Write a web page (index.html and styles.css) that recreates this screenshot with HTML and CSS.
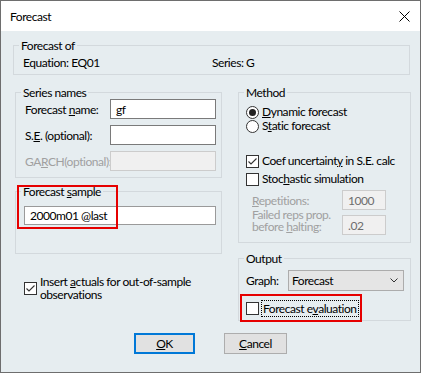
FILE: index.html
```html
<!DOCTYPE html>
<html>
<head>
<meta charset="utf-8">
<link rel="stylesheet" href="styles.css">
</head>
<body>
<div class="window">
  <div class="titlebar">
    <span class="title">Forecast</span>
    <svg class="close" width="11" height="11" viewBox="0 0 11 11"><path d="M0.5 0.5 L10.5 10.5 M10.5 0.5 L0.5 10.5" stroke="#000" stroke-width="1" fill="none"/></svg>
  </div>
  <div class="content">
    <fieldset class="grp grp-of">
      <legend>Forecast of</legend>
      <div class="of-row"><span class="of-eq">Equation: EQ01</span><span>Series: G</span></div>
    </fieldset>
    <div class="cols">
      <div class="col-left">
        <fieldset class="grp names">
          <legend>Series names</legend>
          <div class="names-body">
            <div class="frow"><span class="flabel">Forecast <u>n</u>ame:</span><span class="input">gf</span></div>
            <div class="frow"><span class="flabel">S.<u>E</u>. (optional):</span><span class="input"></span></div>
            <div class="frow"><span class="flabel disabled">GA<u>R</u>CH(optional):</span><span class="input input-disabled"></span></div>
          </div>
        </fieldset>
        <fieldset class="grp sample">
          <legend>Forecast <u>s</u>ample</legend>
          <div class="sample-body"><span class="input input-wide">2000m01 @last</span></div>
        </fieldset>
        <div class="insert">
          <span class="cb"><svg width="11" height="11" viewBox="0 0 11 11"><polyline points="1.5,5.5 4,8 9.5,2.5" fill="none" stroke="#333" stroke-width="1.1"/></svg></span>
          <span class="insert-text">Insert <u>a</u>ctuals for out-of-sample<br>observations</span>
        </div>
      </div>
      <div class="col-right">
        <fieldset class="grp method">
          <legend>Method</legend>
          <div class="method-body">
            <div class="opt"><svg class="radio" width="13" height="13" viewBox="0 0 13 13"><circle cx="6.5" cy="6.5" r="6" fill="#fff" stroke="#333"/><circle cx="6.5" cy="6.5" r="3.5" fill="#222"/></svg><span><u>D</u>ynamic forecast</span></div>
            <div class="opt"><svg class="radio" width="13" height="13" viewBox="0 0 13 13"><circle cx="6.5" cy="6.5" r="6" fill="#fff" stroke="#333"/></svg><span>S<u>t</u>atic forecast</span></div>
            <div class="opt opt-coef"><span class="cb"><svg width="11" height="11" viewBox="0 0 11 11"><polyline points="1.5,5.5 4,8 9.5,2.5" fill="none" stroke="#333" stroke-width="1.1"/></svg></span><span>Coef uncertaint<u>y</u> in S.E. calc</span></div>
            <div class="opt opt-stoch"><span class="cb"></span><span>Stoc<u>h</u>astic simulation</span></div>
            <div class="srow srow-rep"><span class="slabel disabled"><u>R</u>epetitions:</span><span class="input input-small input-disabled">1000</span></div>
            <div class="srow srow-fail"><span class="slabel slabel-two disabled">Failed reps prop.<br>before <u>h</u>alting:</span><span class="input input-small input-disabled">.02</span></div>
          </div>
        </fieldset>
        <fieldset class="grp output">
          <legend>Output</legend>
          <div class="output-body">
            <div class="graph-row"><span class="glabel">Graph:</span><span class="select"><span>Forecast</span><svg width="8" height="5" viewBox="0 0 8 5"><polyline points="0.5,0.5 4,4 7.5,0.5" fill="none" stroke="#333" stroke-width="1"/></svg></span></div>
            <div class="eval-row"><span class="cb"></span><span class="focus">Forecast e<u>v</u>aluation</span></div>
          </div>
        </fieldset>
      </div>
    </div>
    <div class="buttons">
      <span class="btn btn-default"><u>O</u>K</span>
      <span class="btn"><u>C</u>ancel</span>
    </div>
  </div>
  <div class="mark mark-sample"></div>
  <div class="mark mark-eval"></div>
</div>
</body>
</html>
```
FILE: styles.css
```css
html, body {
  margin: 0;
  padding: 0;
  background: #e6edf0;
}
body {
  font-family: Lato, "Noto Sans", sans-serif;
  font-size: 12px;
  letter-spacing: -0.45px;
  color: #000;
}
u {
  text-decoration: underline;
  text-underline-offset: 1px;
}
.window {
  position: relative;
  width: 421px;
  height: 373px;
  box-sizing: border-box;
  border: 1px solid #6e6e6e;
  background: #e6edf0;
  overflow: hidden;
}
.titlebar {
  height: 30px;
  background: #fff;
  display: flex;
  align-items: center;
  justify-content: space-between;
  padding: 0 10px 0 9px;
}
.title {
  line-height: 15px;
  margin-top: 1px;
}
.close {
  display: block;
  margin-top: 1px;
}
.content {
  padding: 8px 10px 0 12px;
}
.grp {
  border: 1px solid #d3d9dd;
  margin: 0;
  padding: 0;
  min-width: 0;
}
.grp legend {
  padding: 0 2px;
  margin-left: 5px;
  line-height: 13px;
}
.of-row {
  display: flex;
  padding: 3px 0 4px 9px;
  line-height: 15px;
}
.of-eq {
  width: 189px;
}
.cols {
  display: flex;
  gap: 16px;
  margin: 11px 0 0 2px;
  align-items: flex-start;
}
.col-left {
  width: 207px;
  flex-shrink: 0;
}
.col-right {
  width: 173px;
  flex-shrink: 0;
}
.names-body {
  display: flex;
  flex-direction: column;
  gap: 6px;
  padding: 0 5px 6px 9px;
}
.frow {
  display: flex;
  align-items: center;
  height: 20px;
}
.flabel {
  width: 85px;
  flex-shrink: 0;
  white-space: nowrap;
  line-height: 15px;
}
.disabled {
  color: #a0a0a0;
}
.input {
  display: flex;
  align-items: center;
  box-sizing: border-box;
  width: 106px;
  height: 20px;
  border: 1px solid #7a7a7a;
  background: #fff;
  padding: 0 5px;
  line-height: 15px;
  white-space: nowrap;
}
.input-disabled {
  background: #f0f0f0;
  border-color: #cccccc;
  color: #6d6d6d;
}
.sample {
  margin-top: 7px;
}
.sample-body {
  padding: 8px 5px 28px 8px;
}
.input-wide {
  width: 192px;
  height: 19px;
  border-color: #9a9a9a;
}
.insert {
  display: flex;
  align-items: center;
  gap: 3px;
  margin-top: 21px;
  padding-left: 9px;
}
.insert-text {
  line-height: 13px;
}
.cb {
  display: flex;
  align-items: center;
  justify-content: center;
  width: 13px;
  height: 13px;
  box-sizing: border-box;
  border: 1px solid #333;
  background: #fff;
  flex-shrink: 0;
}
.cb svg {
  display: block;
}
.method-body {
  display: flex;
  flex-direction: column;
  padding: 6px 5px 7px 7px;
}
.opt {
  display: flex;
  align-items: center;
  gap: 3px;
  height: 14px;
  line-height: 14px;
  white-space: nowrap;
}
.radio {
  display: block;
  flex-shrink: 0;
}
.opt-coef {
  margin-top: 21px;
}
.opt-stoch {
  margin-top: 4px;
}
.srow {
  display: flex;
  align-items: center;
  height: 20px;
  padding-left: 6px;
}
.srow-rep {
  margin-top: 4px;
}
.srow-fail {
  margin-top: 5px;
  align-items: flex-start;
}
.slabel {
  width: 90px;
  flex-shrink: 0;
  line-height: 15px;
  white-space: nowrap;
}
.slabel-two {
  line-height: 12px;
  margin-top: -6px;
}
.input-small {
  width: 44px;
}
.output {
  margin-top: 9px;
}
.output-body {
  display: flex;
  flex-direction: column;
  padding: 5px 5px 3px 7px;
}
.graph-row {
  display: flex;
  align-items: center;
  height: 21px;
}
.glabel {
  width: 42px;
  line-height: 15px;
}
.select {
  display: flex;
  align-items: center;
  justify-content: space-between;
  box-sizing: border-box;
  width: 116px;
  height: 21px;
  background: #e5e5e5;
  border: 1px solid #acacac;
  padding: 0 5px 0 3px;
  line-height: 15px;
}
.select svg {
  display: block;
}
.eval-row {
  display: flex;
  align-items: center;
  height: 17px;
  margin-top: 9px;
}
.focus {
  margin-left: 2px;
  border: 1px dotted #000;
  padding: 0 1px;
  line-height: 15px;
  white-space: nowrap;
}
.buttons {
  display: flex;
  justify-content: center;
  gap: 29px;
  margin-top: 12px;
  padding-right: 2px;
}
.btn {
  display: flex;
  align-items: center;
  justify-content: center;
  box-sizing: border-box;
  width: 63px;
  height: 21px;
  background: #e1e1e1;
  border: 1px solid #adadad;
  line-height: 15px;
}
.btn-default {
  width: 61px;
  border: 2px solid #0078d7;
}
.mark {
  position: absolute;
  box-sizing: border-box;
  border: 2px solid #e60000;
}
.mark-sample {
  left: 16px;
  top: 184px;
  width: 101px;
  height: 44px;
}
.mark-eval {
  left: 239px;
  top: 293px;
  width: 122px;
  height: 28px;
}
```
